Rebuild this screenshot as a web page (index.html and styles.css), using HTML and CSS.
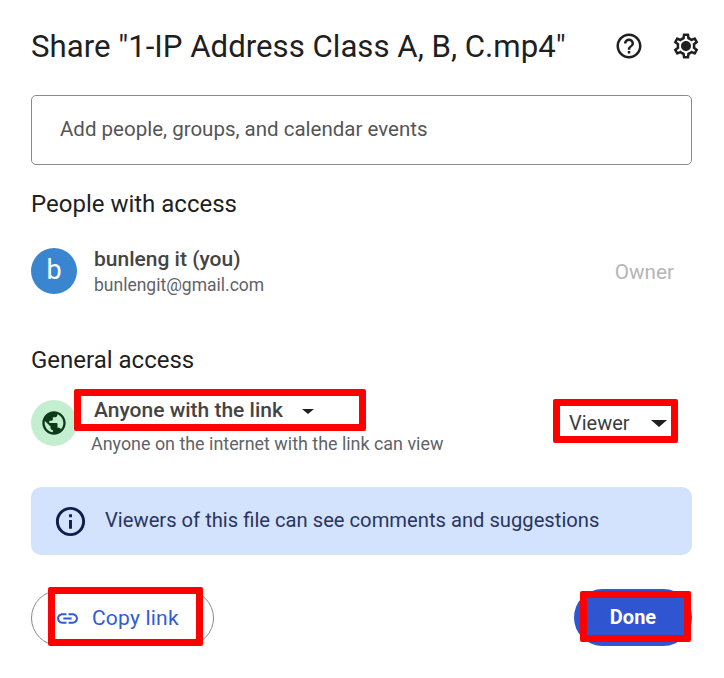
FILE: index.html
```html
<!DOCTYPE html>
<html lang="en">
<head>
  <meta charset="UTF-8">
  <meta name="viewport" content="width=device-width, initial-scale=1">
  <title>Share dialog</title>
  <link rel="stylesheet" href="styles.css">
</head>
<body>
  <div class="dialog">
    <div class="header">
      <h1>Share "1-IP Address Class A, B, C.mp4"</h1>
      <div class="header-icons">
        <svg width="30" height="30" viewBox="0 0 24 24" fill="#1f1f1f"><path d="M11 18h2v-2h-2v2zm1-16C6.48 2 2 6.48 2 12s4.48 10 10 10 10-4.48 10-10S17.52 2 12 2zm0 18c-4.41 0-8-3.59-8-8s3.59-8 8-8 8 3.59 8 8-3.59 8-8 8zm0-14c-2.21 0-4 1.79-4 4h2c0-1.1.9-2 2-2s2 .9 2 2c0 2-3 1.75-3 5h2c0-2.25 3-2.5 3-5 0-2.21-1.79-4-4-4z"/></svg>
        <svg width="30" height="30" viewBox="0 0 24 24" fill="#1f1f1f"><path d="M19.43 12.98c.04-.32.07-.64.07-.98 0-.34-.03-.66-.07-.98l2.11-1.65c.19-.15.24-.42.12-.64l-2-3.46c-.09-.16-.26-.25-.44-.25-.06 0-.12.01-.17.03l-2.49 1c-.52-.4-1.08-.73-1.69-.98l-.38-2.65C14.46 2.18 14.25 2 14 2h-4c-.25 0-.46.18-.49.42l-.38 2.65c-.61.25-1.17.59-1.69.98l-2.49-1c-.06-.02-.12-.03-.18-.03-.17 0-.34.09-.43.25l-2 3.46c-.13.22-.07.49.12.64l2.11 1.65c-.04.32-.07.65-.07.98 0 .33.03.66.07.98l-2.11 1.65c-.19.15-.24.42-.12.64l2 3.46c.09.16.26.25.44.25.06 0 .12-.01.17-.03l2.49-1c.52.4 1.08.73 1.69.98l.38 2.65c.03.24.24.42.49.42h4c.25 0 .46-.18.49-.42l.38-2.65c.61-.25 1.17-.59 1.69-.98l2.49 1c.06.02.12.03.18.03.17 0 .34-.09.43-.25l2-3.46c.12-.22.07-.49-.12-.64l-2.11-1.65zm-1.98-1.71c.04.31.05.52.05.73 0 .21-.02.43-.05.73l-.14 1.13.89.7 1.08.84-.7 1.21-1.27-.51-1.04-.42-.9.68c-.43.32-.84.56-1.25.73l-1.06.43-.16 1.13-.2 1.35h-1.4l-.19-1.35-.16-1.13-1.06-.43c-.43-.18-.83-.41-1.23-.71l-.91-.7-1.06.43-1.27.51-.7-1.21 1.08-.84.89-.7-.14-1.13c-.03-.31-.05-.54-.05-.74s.02-.43.05-.73l.14-1.13-.89-.7-1.08-.84.7-1.21 1.27.51 1.04.42.9-.68c.43-.32.84-.56 1.25-.73l1.06-.43.16-1.13.2-1.35h1.39l.19 1.35.16 1.13 1.06.43c.43.18.83.41 1.23.71l.91.7 1.06-.43 1.27-.51.7 1.21-1.07.85-.89.7.14 1.13zM12 8c-2.21 0-4 1.79-4 4s1.79 4 4 4 4-1.79 4-4-1.79-4-4-4z"/></svg>
      </div>
    </div>

    <div class="add-input">Add people, groups, and calendar events</div>

    <h2>People with access</h2>
    <div class="person">
      <div class="avatar">b</div>
      <div class="person-info">
        <div class="person-name">bunleng it (you)</div>
        <div class="person-mail">bunlengit@gmail.com</div>
      </div>
      <div class="owner">Owner</div>
    </div>

    <h2 class="general-title">General access</h2>
    <div class="access">
      <div class="globe">
        <svg width="28" height="28" viewBox="0 0 24 24" fill="#0d3b1a"><path d="M12 2C6.48 2 2 6.48 2 12s4.48 10 10 10 10-4.48 10-10S17.52 2 12 2zM4 12c0-.61.08-1.21.21-1.78L8.99 15v1c0 1.1.9 2 2 2v1.93C7.06 19.43 4 16.07 4 12zm13.89 5.4c-.26-.81-1-1.4-1.9-1.4h-1v-3c0-.55-.45-1-1-1h-6v-2h2c.55 0 1-.45 1-1V7h2c1.1 0 2-.9 2-2v-.41C17.92 5.77 20 8.65 20 12c0 2.08-.81 3.98-2.11 5.4z"/></svg>
      </div>
      <div class="access-text">
        <div class="access-type">
          Anyone with the link<span class="caret small"></span>
          <span class="mark mark-type"></span>
        </div>
        <div class="access-desc">Anyone on the internet with the link can view</div>
      </div>
      <div class="role">
        Viewer<span class="caret"></span>
        <span class="mark mark-role"></span>
      </div>
    </div>

    <div class="notice">
      <svg width="35" height="35" viewBox="0 0 24 24" fill="#0f1f4d"><path d="M11 7h2v2h-2zm0 4h2v6h-2zm1-9C6.48 2 2 6.48 2 12s4.48 10 10 10 10-4.48 10-10S17.52 2 12 2zm0 18c-4.41 0-8-3.59-8-8s3.59-8 8-8 8 3.59 8 8-3.59 8-8 8z"/></svg>
      <span class="notice-text">Viewers of this file can see comments and suggestions</span>
    </div>

    <div class="footer">
      <div class="copy-btn">
        <svg width="25" height="25" viewBox="0 0 24 24" fill="#2f5bd7"><path d="M3.9 12c0-1.71 1.39-3.1 3.1-3.1h4V7H7c-2.76 0-5 2.24-5 5s2.24 5 5 5h4v-1.9H7c-1.71 0-3.1-1.39-3.1-3.1zM8 13h8v-2H8v2zm9-6h-4v1.9h4c1.71 0 3.1 1.39 3.1 3.1s-1.39 3.1-3.1 3.1h-4V17h4c2.76 0 5-2.24 5-5s-2.24-5-5-5z"/></svg>
        <span>Copy link</span>
        <span class="mark mark-copy"></span>
      </div>
      <div class="done-btn">
        Done
        <span class="mark mark-done"></span>
      </div>
    </div>
  </div>
</body>
</html>
```

FILE: styles.css
```css
body {
  margin: 0;
  background: #fff;
  font-family: Roboto, "Noto Sans", sans-serif;
  color: #1f1f1f;
}
.dialog {
  width: 724px;
  height: 678px;
  box-sizing: border-box;
  padding: 26px 32px 0 31px;
  overflow: hidden;
}
.header {
  display: flex;
  align-items: center;
  justify-content: space-between;
  height: 40px;
}
h1 {
  margin: 2px 0 0;
  font-size: 31.2px;
  font-weight: 400;
  line-height: 40px;
  white-space: nowrap;
}
.header-icons {
  display: flex;
  gap: 27px;
  margin-right: -9px;
}
.add-input {
  margin-top: 29px;
  height: 70px;
  box-sizing: border-box;
  border: 1px solid #8a8a8a;
  border-radius: 5px;
  padding-left: 28px;
  line-height: 66px;
  font-size: 20.5px;
  color: #555;
}
h2 {
  margin: 24px 0 0;
  font-size: 24px;
  font-weight: 400;
  line-height: 30px;
}
.person {
  display: flex;
  align-items: center;
  margin-top: 26px;
  height: 52px;
}
.avatar {
  width: 46px;
  height: 46px;
  border-radius: 50%;
  background: #3a85d0;
  color: #fff;
  font-size: 27px;
  line-height: 45px;
  text-align: center;
}
.person-info {
  margin-left: 17px;
  flex: 1;
}
.person-name {
  font-size: 21px;
  font-weight: 500;
  line-height: 28px;
  color: #444;
}
.person-mail {
  font-size: 17.5px;
  line-height: 24px;
  color: #5f6368;
}
.owner {
  margin: 2px 18px 0 0;
  font-size: 20.7px;
  color: #b5b5b5;
}
.general-title {
  margin-top: 48px;
}
.access {
  display: flex;
  align-items: flex-start;
  margin-top: 14px;
}
.globe {
  width: 46px;
  height: 46px;
  margin-top: 11px;
  border-radius: 50%;
  background: #c4eed0;
  display: flex;
  align-items: center;
  justify-content: center;
}
.access-text {
  margin-left: 14px;
  flex: 1;
}
.access-type {
  position: relative;
  margin-left: 3px;
  font-size: 21px;
  font-weight: 500;
  line-height: 42px;
  color: #444;
}
.access-desc {
  margin-top: 2px;
  font-size: 17.9px;
  line-height: 22px;
  color: #5f6368;
}
.caret {
  display: inline-block;
  margin: 0 0 2px 21px;
  vertical-align: middle;
  border-left: 8px solid transparent;
  border-right: 8px solid transparent;
  border-top: 7px solid #1f1f1f;
}
.caret.small {
  margin: 0 0 0 19px;
  border-left-width: 6px;
  border-right-width: 6px;
  border-top-width: 5px;
}
.role {
  position: relative;
  margin: 10px 14px 0 0;
  padding-left: 16px;
  width: 125px;
  height: 44px;
  box-sizing: border-box;
  font-size: 20px;
  line-height: 49px;
  white-space: nowrap;
  color: #3c3c3c;
}
.mark {
  position: absolute;
  box-sizing: border-box;
  border: 7px solid #ff0000;
  border-radius: 2px;
  pointer-events: none;
}
.mark-type {
  left: -20px;
  top: 0;
  width: 292px;
  height: 42px;
}
.mark-role {
  left: 0;
  top: 0;
  width: 125px;
  height: 44px;
}
.mark-copy {
  left: 16px;
  top: -4px;
  width: 155px;
  height: 59px;
}
.mark-done {
  left: 6px;
  top: 2px;
  width: 111px;
  height: 51px;
}
.notice {
  display: flex;
  align-items: center;
  gap: 17px;
  margin-top: 32px;
  height: 68px;
  padding-left: 22px;
  border-radius: 10px;
  background: #d3e3fd;
  font-size: 20.2px;
  color: #2a3560;
}
.notice-text {
  margin-bottom: 3px;
}
.footer {
  display: flex;
  justify-content: space-between;
  align-items: flex-start;
  margin-top: 34px;
}
.copy-btn {
  position: relative;
  display: flex;
  align-items: center;
  gap: 12px;
  width: 183px;
  height: 56px;
  margin-top: 1px;
  box-sizing: border-box;
  padding-left: 23px;
  border: 1px solid #8a8a8a;
  border-radius: 28px;
  font-size: 21px;
  letter-spacing: 0.2px;
  color: #2f5bd7;
}
.done-btn {
  position: relative;
  width: 118px;
  height: 57px;
  border-radius: 29px;
  background: #2f55d0;
  color: #fff;
  font-size: 20px;
  font-weight: 700;
  line-height: 56px;
  text-align: center;
}
```
